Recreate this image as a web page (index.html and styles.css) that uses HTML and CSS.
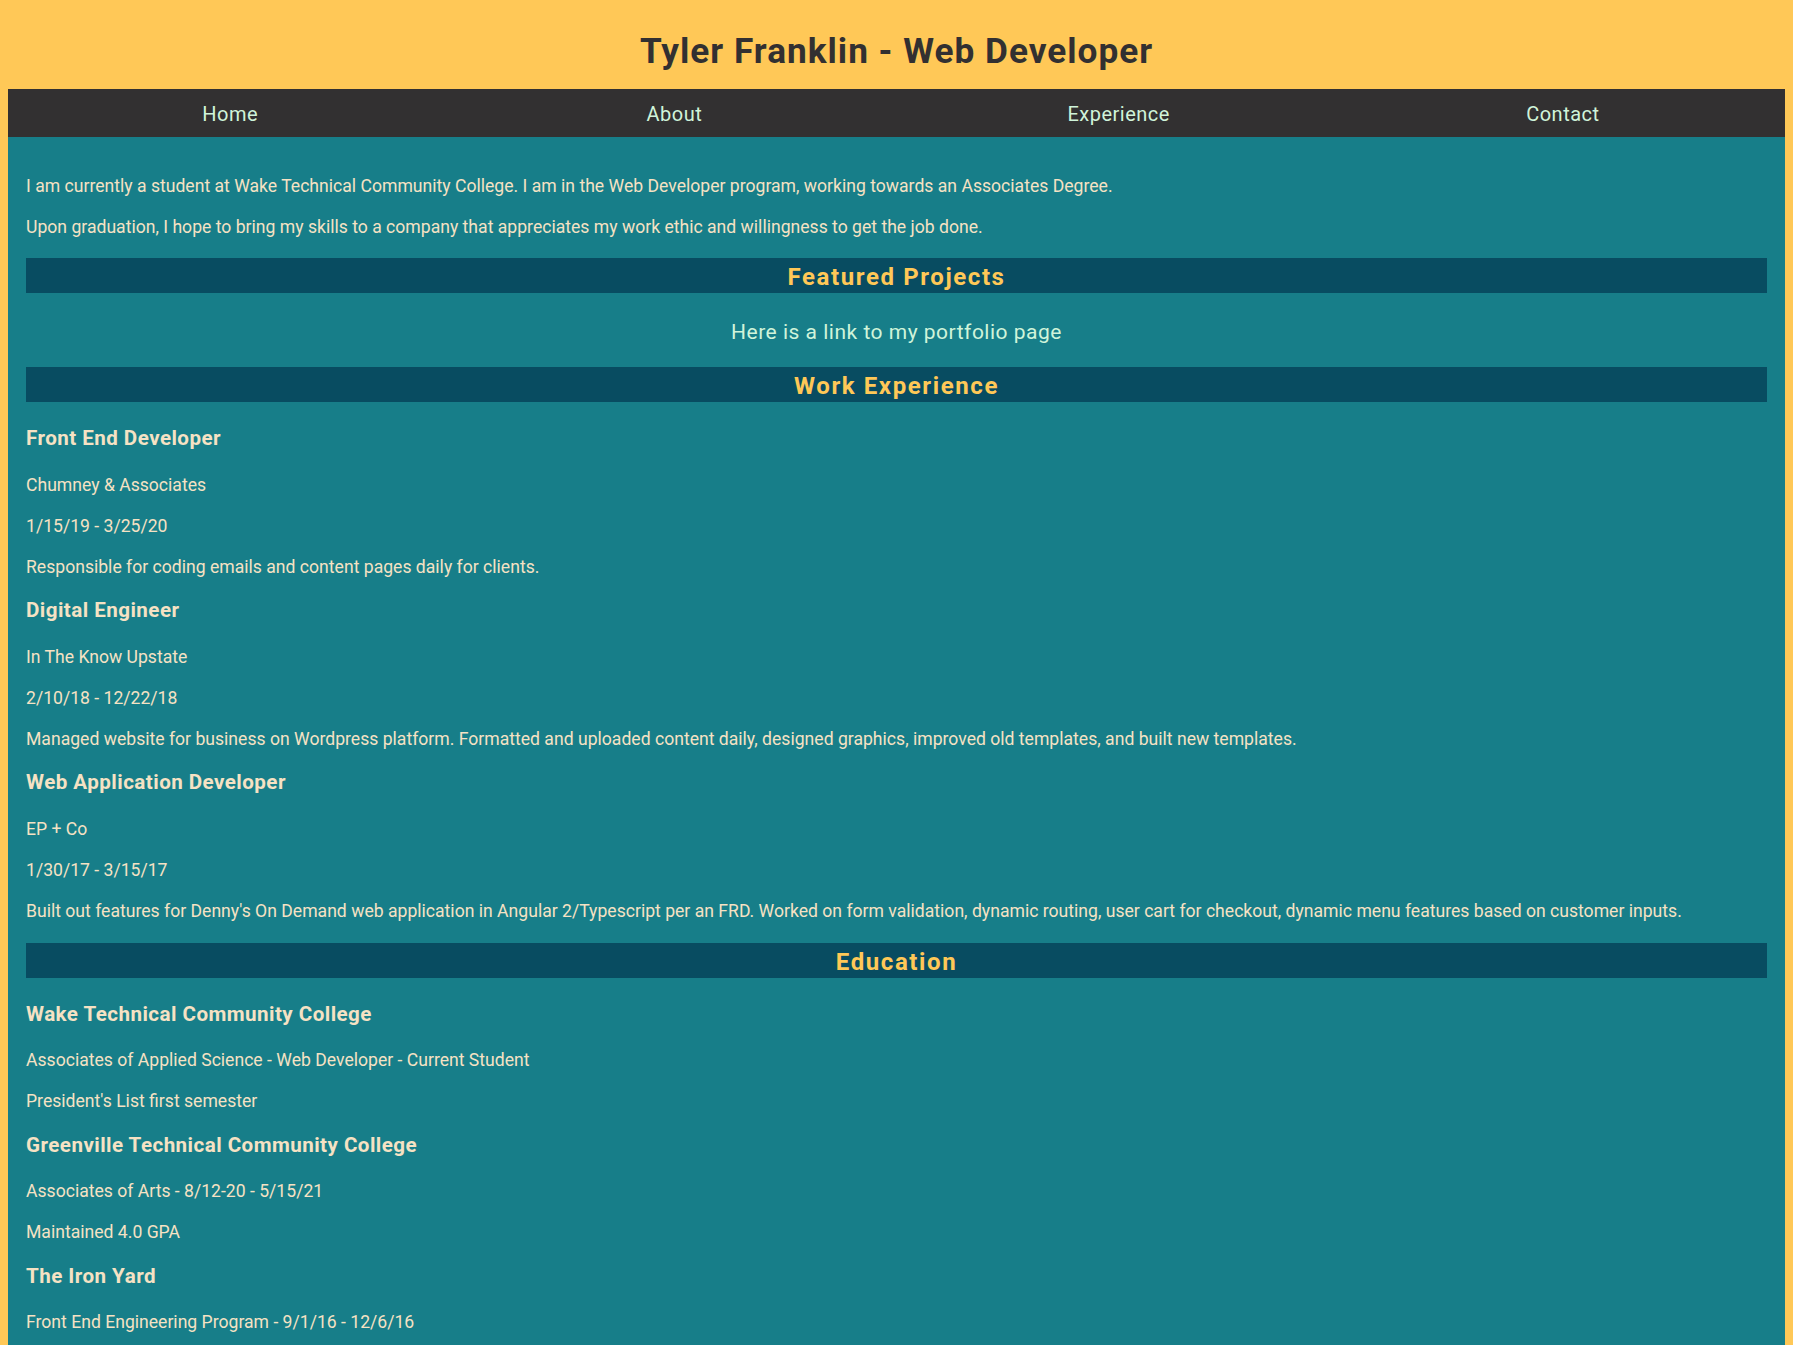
FILE: index.html
```html
<!DOCTYPE html>
<html lang="en">
<head>
<meta charset="utf-8">
<title>Tyler Franklin - Web Developer</title>
<link rel="stylesheet" href="styles.css">
</head>
<body>
<header class="site-header">
  <h1 class="site-title">Tyler Franklin - Web Developer</h1>
</header>
<nav class="site-nav">
  <a class="nav-link" href="#">Home</a>
  <a class="nav-link" href="#">About</a>
  <a class="nav-link" href="#">Experience</a>
  <a class="nav-link" href="#">Contact</a>
</nav>
<main class="content">
  <p class="text">I am currently a student at Wake Technical Community College. I am in the Web Developer program, working towards an Associates Degree.</p>
  <p class="text">Upon graduation, I hope to bring my skills to a company that appreciates my work ethic and willingness to get the job done.</p>

  <h2 class="section-title">Featured Projects</h2>
  <p class="portfolio"><a class="portfolio-link" href="#">Here is a link to my portfolio page</a></p>

  <h2 class="section-title">Work Experience</h2>
  <h3 class="item-title">Front End Developer</h3>
  <p class="text">Chumney &amp; Associates</p>
  <p class="text">1/15/19 - 3/25/20</p>
  <p class="text">Responsible for coding emails and content pages daily for clients.</p>

  <h3 class="item-title">Digital Engineer</h3>
  <p class="text">In The Know Upstate</p>
  <p class="text">2/10/18 - 12/22/18</p>
  <p class="text">Managed website for business on Wordpress platform. Formatted and uploaded content daily, designed graphics, improved old templates, and built new templates.</p>

  <h3 class="item-title">Web Application Developer</h3>
  <p class="text">EP + Co</p>
  <p class="text">1/30/17 - 3/15/17</p>
  <p class="text">Built out features for Denny's On Demand web application in Angular 2/Typescript per an FRD. Worked on form validation, dynamic routing, user cart for checkout, dynamic menu features based on customer inputs.</p>

  <h2 class="section-title">Education</h2>
  <h3 class="item-title">Wake Technical Community College</h3>
  <p class="text">Associates of Applied Science - Web Developer - Current Student</p>
  <p class="text">President's List first semester</p>

  <h3 class="item-title">Greenville Technical Community College</h3>
  <p class="text">Associates of Arts - 8/12-20 - 5/15/21</p>
  <p class="text">Maintained 4.0 GPA</p>

  <h3 class="item-title">The Iron Yard</h3>
  <p class="text">Front End Engineering Program - 9/1/16 - 12/6/16</p>
</main>
</body>
</html>
```
FILE: styles.css
```css
html {
  background: #FFC857;
}

body {
  margin: 8px;
  background: #FFC857;
  font-family: Roboto, "Liberation Sans", sans-serif;
  font-size: 17.6px;
  color: #F5E2C4;
}

.site-header {
  padding: 20px 0 14px;
}

.site-title {
  margin: 0;
  font-size: 35.2px;
  line-height: 47px;
  font-weight: 700;
  letter-spacing: 1px;
  text-align: center;
  color: #323031;
}

.site-nav {
  display: flex;
  height: 48px;
  box-sizing: border-box;
  padding-top: 3px;
  background: #323031;
}

.nav-link {
  flex: 1 1 0;
  text-align: center;
  font-size: 20px;
  line-height: 45px;
  letter-spacing: 0.5px;
  color: #D0F4DA;
  text-decoration: none;
}

.content {
  background: #177E89;
  padding: 20.7px 18px 40px;
}

.text {
  margin: 15px 0;
  line-height: 26px;
}

.section-title {
  margin: 18.7px 0 23px;
  padding-top: 3px;
  line-height: 32px;
  font-size: 24px;
  font-weight: 700;
  letter-spacing: 1.6px;
  text-align: center;
  background: #084C61;
  color: #FFC857;
}

.portfolio {
  margin: 23.7px 0 20.3px;
  line-height: 30px;
  font-size: 21px;
  letter-spacing: 0.5px;
  text-align: center;
}

.portfolio-link {
  color: #D0F4DA;
  text-decoration: none;
}

.item-title {
  margin: 17.4px 0 19.2px;
  font-size: 20.6px;
  line-height: 27.4px;
  font-weight: 700;
  letter-spacing: 0.45px;
  color: #F5E2C4;
}
```
